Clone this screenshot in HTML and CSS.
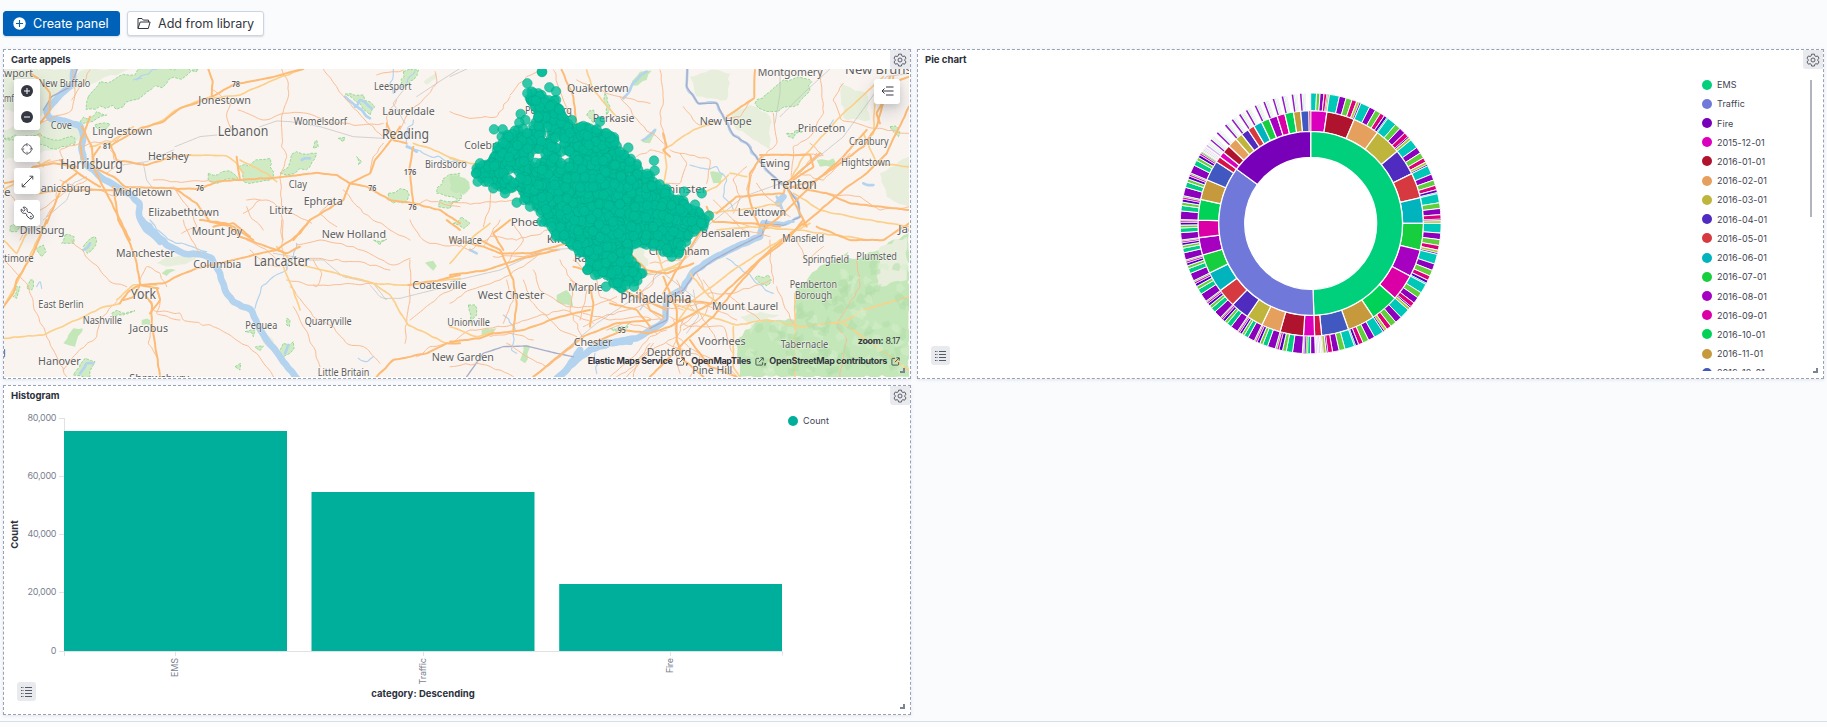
FILE: index.html
```html
<!DOCTYPE html>
<html lang="en">
<head>
<meta charset="utf-8">
<title>Dashboard</title>
<link rel="stylesheet" href="styles.css">
</head>
<body>
<svg class="defs" width="0" height="0">
  <symbol id="gear" viewBox="0 0 16 16"><path fill="none" stroke="currentColor" stroke-width="1.1" stroke-linejoin="round" d="M6.4 1.3h3.2l.5 2 1.2.7 2-.6 1.6 2.7-1.5 1.4v1.2l1.5 1.4-1.6 2.7-2-.6-1.2.7-.5 2H6.4l-.5-2-1.2-.7-2 .6-1.6-2.7 1.5-1.4V7.500L1.100 6.100l1.600-2.700 2 .6 1.200-.7z"/><circle cx="8" cy="8" r="2.300" fill="none" stroke="currentColor" stroke-width="1.100"/></symbol>
  <symbol id="list" viewBox="0 0 11 10"><path stroke="currentColor" stroke-width="1" d="M4 .5h7M4 3.500h7M4 6.500h7M4 9.500h7M0 .5h1M0 3.500h1M0 6.500h1M0 9.500h1M1.500 .5h1M1.500 3.500h1M1.500 6.500h1M1.500 9.500h1"/></symbol>
  <symbol id="popout" viewBox="0 0 10 10"><path fill="none" stroke="currentColor" stroke-width=".9" d="M4.500 1.500H2a1 1 0 0 0-1 1V8a1 1 0 0 0 1 1h5.500a1 1 0 0 0 1-1V5.800M6 .9h3.200V4M9 1.100 4.300 5.800"/></symbol>
</svg>

<div class="toolbar">
  <button class="btn btn-primary">
    <svg width="13" height="13" viewBox="0 0 13 13"><circle cx="6.500" cy="6.500" r="6.200" fill="#fff"/><path d="M6.500 3v7M3 6.500h7" stroke="#0061b8" stroke-width="1.100"/></svg>
    <span>Create panel</span>
  </button>
  <button class="btn btn-outline">
    <svg width="14" height="13" viewBox="0 0 14 13"><path d="M1 11.500V1.500h4l1.300 1.600h5.200v2M1 11.500 3.200 5h9.900l-1.800 6.500z" fill="none" stroke="#343741" stroke-width="1" stroke-linejoin="round"/></svg>
    <span>Add from library</span>
  </button>
</div>

<main class="grid">
  <section class="panel">
    <h2>Carte appels</h2>
    <div class="gear"><svg width="14" height="14"><use href="#gear"/></svg></div>
    <div class="map">
      <svg id="map" width="905" height="308" viewBox="12 207 2715 924"></svg>
      <div class="controls">
        <div class="ctl zoom">
          <svg width="12" height="12" viewBox="0 0 12 12"><circle cx="6" cy="6" r="6" fill="#343741"/><path d="M6 3v6M3 6h6" stroke="#fff"/></svg>
          <svg width="12" height="12" viewBox="0 0 12 12"><circle cx="6" cy="6" r="6" fill="#343741"/><path d="M3 6h6" stroke="#fff"/></svg>
        </div>
        <div class="ctl"><svg width="12" height="12" viewBox="0 0 13 13"><circle cx="6.500" cy="6.500" r="5" fill="none" stroke="#343741" stroke-width=".9" stroke-dasharray="5.850 2" stroke-dashoffset="-1"/><path d="M6.500 0v3.500M6.500 9.500v3.500M0 6.500h3.500M9.500 6.500H13" stroke="#343741" stroke-width=".9"/></svg></div>
        <div class="ctl"><svg width="13" height="13" viewBox="0 0 13 13"><path d="M1.500 11.500l10-10M8.500 1.200h3.300v3.300M1.200 8.500v3.300h3.300" fill="none" stroke="#343741" stroke-width=".9"/></svg></div>
        <div class="ctl"><svg width="14" height="14" viewBox="0 0 14 14"><path d="M1.300 3.100 3.600 5.200 5.200 3.700 3.100 1.300C5.600.5 7.800 2.600 7 5.200l1.500 1.300 1.600-.2 2.600 2.500a2.400 2.400 0 0 1-3.400 3.400L6.700 9.900l.1-1.400-1.600-1.300C2.800 8 .5 5.800 1.300 3.100z" fill="none" stroke="#343741" stroke-width=".95" stroke-linejoin="round"/><circle cx="10.900" cy="10.600" r=".8" fill="#343741"/></svg></div>
      </div>
      <div class="ctl layers"><svg width="13" height="10" viewBox="0 0 13 10"><path d="M5 1h7.500M1 5h11.500M5 9h7.500M3.500 2.500 1 5l2.500 2.500" fill="none" stroke="#343741"/></svg></div>
      <div class="mapzoom"><b>zoom:</b> 8.17</div>
      <div class="attrib"><span>Elastic Maps Service</span> <svg width="9" height="9"><use href="#popout"/></svg>, <span>OpenMapTiles</span> <svg width="9" height="9"><use href="#popout"/></svg>, <span>OpenStreetMap contributors</span> <svg width="9" height="9"><use href="#popout"/></svg></div>
    </div>
    <i class="resize"></i>
  </section>

  <section class="panel">
    <h2>Pie chart</h2>
    <div class="gear"><svg width="14" height="14"><use href="#gear"/></svg></div>
    <div class="pie">
      <svg id="pie" width="779" height="308" viewBox="918 69 779 308"></svg>
      <ul id="legend" class="legend"></ul>
      <i class="scroll"></i>
    </div>
    <div class="listbtn"><svg width="11" height="10"><use href="#list"/></svg></div>
    <i class="resize"></i>
  </section>

  <section class="panel">
    <h2>Histogram</h2>
    <div class="gear"><svg width="14" height="14"><use href="#gear"/></svg></div>
    <div class="hist">
      <svg width="779" height="308" viewBox="4 405 779 308">
        <g fill="#00ae9c"><path d="M64 431h223v220H64zM311.500 492h223v159h-223zM559.200 584H782v67H559.200z"/></g>
        <path d="M64.500 418v13M59 418.500h5.500M59 476.500h5M59 534.500h5M59 592.500h5M59 651.500h723.500v4M64.500 651v5M175.500 651v5M423.500 651v5M670.500 651v5" fill="none" stroke="#e0e2e6"/>
        <g class="axis" text-anchor="end">
          <text x="56.500" y="421" textLength="29">80,000</text><text x="56.500" y="479" textLength="29">60,000</text><text x="56.500" y="537" textLength="29">40,000</text><text x="56.500" y="595" textLength="29">20,000</text><text x="56.500" y="654">0</text>
          <text transform="translate(178 658) rotate(-90)" textLength="19">EMS</text><text transform="translate(426 658) rotate(-90)" textLength="26.500">Traffic</text><text transform="translate(673 658) rotate(-90)" textLength="15">Fire</text>
        </g>
        <g class="axis-title" text-anchor="middle">
          <text transform="translate(18 534.500) rotate(-90)" textLength="28.500">Count</text><text x="423" y="697" textLength="103.500">category: Descending</text>
        </g>
      </svg>
      <ul class="legend"><li><i class="teal"></i>Count</li></ul>
    </div>
    <div class="listbtn"><svg width="11" height="10"><use href="#list"/></svg></div>
    <i class="resize"></i>
  </section>
</main>
<footer></footer>
<script src="charts.js"></script>
</body>
</html>
```

FILE: styles.css
```css
* { box-sizing: border-box; }
body { margin: 0; height: 727px; background: #fafbfd; font-family: Inter, "Liberation Sans", sans-serif; color: #343741; overflow: hidden; display: flex; flex-direction: column; }
.defs { position: absolute; }
.toolbar { display: flex; gap: 7px; padding: 11px 3px 0; height: 49px; align-items: flex-start; flex: none; }
.btn { height: 25px; border-radius: 3px; border: 1px solid #ccd5e3; display: flex; align-items: center; font: 12.600px Inter, sans-serif; letter-spacing: -.03px; padding: 0 9px; background: #fff; color: #343741; box-shadow: 0 1px 2px rgba(0,0,0,.14); white-space: nowrap; }
.btn svg { flex: none; }
.btn-primary { background: #0061b8; border-color: #0061b8; color: #fff; width: 117px; gap: 7px; padding: 0 0 0 9px; }
.btn-outline { width: 137px; gap: 7px; padding-right: 0; }
.grid { display: grid; grid-template-columns: 908px 907px; grid-auto-rows: 330px; column-gap: 6px; row-gap: 6px; padding-left: 3px; flex: none; }
.panel { position: relative; background: #fff; border: 1px dashed #98a2b3; display: flex; flex-direction: column; box-shadow: 0 1px 3px rgba(100,115,150,.16); }
.panel h2 { margin: 0; height: 19px; padding-left: 7px; font-size: 9.600px; line-height: 19px; font-weight: 700; flex: none; color: #2c303a; }
.gear { position: absolute; top: 0; right: 0; width: 20px; height: 19px; background: #e9eaed; border-radius: 0 0 0 3px; display: flex; align-items: center; justify-content: center; color: #535966; }
.listbtn { position: absolute; left: 13px; bottom: 13px; width: 19px; height: 19px; border-radius: 3px; background: #e9eaed; display: flex; align-items: center; justify-content: center; color: #555a69; }
.resize { position: absolute; right: 5px; bottom: 5px; width: 5px; height: 5px; border-right: 2px solid #7c8494; border-bottom: 2px solid #7c8494; }
.map { position: relative; height: 308px; width: 905px; overflow: hidden; }
.map > svg { display: block; }
.controls { position: absolute; left: 10px; top: 10px; display: flex; flex-direction: column; gap: 6px; }
.ctl { width: 26px; height: 26px; background: #fff; border-radius: 3px; display: flex; align-items: center; justify-content: center; box-shadow: 0 8px 20px rgba(50,55,70,.2), 0 3px 6px rgba(50,55,70,.14); }
.zoom { height: 51px; flex-direction: column; gap: 14px; padding-bottom: 1px; }
.layers { position: absolute; right: 9px; top: 10px; height: 25px; padding-bottom: 1px; }
.mapzoom { position: absolute; right: 9px; bottom: 30px; font-size: 9px; letter-spacing: -.35px; line-height: 12px; white-space: nowrap; }
.attrib { position: absolute; right: 9px; bottom: 10px; font-size: 9px; letter-spacing: -.33px; line-height: 12px; font-weight: 700; white-space: nowrap; display: flex; align-items: center; }
.attrib span { margin-right: 4px; }
.attrib svg + span { margin-left: 3px; }
.pie, .hist { display: flex; position: relative; height: 308px; }
.pie > svg, .hist > svg { flex: none; }
.legend { margin: 0; list-style: none; padding: 6px 0 0 5px; height: 302px; overflow: hidden; flex: none; font-size: 9px; color: #404452; width: 105px; }
.legend li { display: flex; align-items: center; height: 19.220px; gap: 5px; white-space: nowrap; letter-spacing: .08px; }
.legend li i { width: 10px; height: 10px; border-radius: 5px; background: var(--c); flex: none; }
.legend .teal { background: #00ae9c; }
.scroll { margin: 11px 0 0 8px; width: 2px; height: 137px; background: #b2b5bd; }
.axis { font: 9px Inter, sans-serif; fill: #7a8190; }
.axis-title { font: 700 9.500px Inter, sans-serif; fill: #2c303a; }
footer { margin-top: 6px; flex: 1; border-top: 1px solid #d8dde5; background: #fdfdfe; }
.m { stroke: #fdbb75; stroke-width: 6; }
.y { stroke: #fcd08a; stroke-width: 5; }
.t { stroke: #fabd92; stroke-width: 3; }
.r { stroke: #bdbbbb; stroke-width: 2; }
.w { stroke: #b3d3ee; stroke-width: 20; }
.w2 { stroke: #b3d3ee; stroke-width: 8; }
.w3 { stroke: #b3d3ee; stroke-width: 3.500; }
.b { stroke: #a9adc8; stroke-width: 4; }
.g { fill: #d0ebc4; stroke: #8ad28c; stroke-width: 2.500; stroke-dasharray: 8 4; }
.l { fill: #e7efdc; stroke: none; }
.d { fill: #c4e7b9; stroke: none; }
.town { font-family: "Noto Sans", sans-serif; fill: #5e5e5e; stroke: #fff; stroke-width: 3; stroke-opacity: .7; paint-order: stroke; }
.calls { fill: #00bd98; fill-opacity: .8; stroke: #00a584; stroke-width: 2; stroke-opacity: .65; }
```

FILE: charts.js
```js
const NS = 'http://www.w3.org/2000/svg';
function add(parent, tag, attrs, text) {
  const e = document.createElementNS(NS, tag);
  for (const k in attrs) e.setAttribute(k, attrs[k]);
  if (text) e.textContent = text;
  parent.appendChild(e);
  return e;
}
let seed = 7;
function rnd() { seed = (seed * 16807) % 2147483647; return seed / 2147483647; }

/* ---------- map ---------- */
const map = document.getElementById('map');
add(map, 'rect', { x: 0, y: 200, width: 2740, height: 940, fill: '#f9f4f0' });
const tiles = { A: [0, 0], B: [0, 660], C: [1350, 120], D: [1350, 660] };
const shapes = `
A l 10,207 210,207 230,240 120,350 10,330
A l 10,390 120,360 230,370 240,420 120,460 10,480
A g 265,290 300,245 385,225 430,205 595,207 500,250 440,275 370,320 258,328
A g 240,365 290,335 320,345 250,370
A l 210,270 300,240 390,207 270,207 210,230
A g 10,415 120,400 160,420 225,415 225,435 150,445 20,420
A g 285,375 330,372 320,385 290,385
A g 625,520 665,515 700,520 715,540 640,550
A g 715,500 810,475 810,500 820,535 730,545
A g 840,520 870,485 890,455 950,460 930,500 860,525
A g 945,425 940,445 955,440 950,420
A g 1015,415 1035,412 1030,425
A g 1035,282 1090,285 1125,320 1110,345 1080,310
A g 1210,215 1255,210 1240,240 1205,260
A g 1070,470 1085,485 1075,495
A g 1165,580 1220,570 1220,605 1180,610
A g 1340,530 1380,520 1385,595 1310,580
A g 1320,600 1380,600 1350,625 1315,620
A l 1270,245 1310,220 1310,235 1280,255
B g 105,80 130,75 138,95 125,110
B g 195,45 222,50 222,70 185,70
B g 250,80 285,50 290,60 262,100
B g 30,20 60,20 50,35 30,35
B g 90,180 100,180 95,210 80,205
B g 45,200 60,200 50,235 40,230
B l 470,130 505,110 590,110 570,125 500,140
B d 485,160 515,147 527,150 500,168
B g 335,280 405,272 370,285 340,290
B d 190,370 220,325 248,325 225,380
B g 230,450 255,415 285,425 270,470 220,465
B g 1120,60 1160,58 1140,75
B d 1275,128 1300,122 1310,138 1300,152
B g 860,295 870,300 868,320 860,315
B g 835,400 850,370 880,365 870,400 850,420
B g 735,335 765,330 760,350
B g 765,382 790,378 780,392
B g 705,440 722,430 720,450
B l 780,335 810,350 825,390 790,370
B d 425,300 450,300 450,315 425,315
C l 780,90 840,100 830,180 740,170 720,110
C l 1170,130 1250,160 1260,240 1180,235
C l 1290,400 1377,350 1377,500 1310,470
C l 840,220 900,195 960,230 960,330 900,290 860,270
C g 915,190 1000,120 1045,110 1085,125 1080,150 1030,200 965,215
C d 1100,360 1150,355 1155,380 1110,380
C g 1010,280 1060,275 1030,295
C g 465,160 480,200 470,225
C g 410,225 430,210 430,250
C d 570,300 620,265 600,310
C d 780,395 820,400 815,430 790,430
C g 1320,260 1345,265 1345,290
C d 530,150 570,95 605,92 590,120
C g 10,550 35,530 60,550 40,565
C d 0,405 45,415 60,445 40,465 0,450
D d 885,330 940,295 1035,300 1035,215 1100,150 1150,120 1230,115 1377,40 1377,470 870,470 860,370
D d 320,225 350,210 365,230 370,260 320,245
D g 55,255 75,255 80,285 60,310
D g 480,325 535,310 520,330
D g 915,175 955,165 960,190 930,190
D d 220,375 240,380 225,430 210,420
D l 550,90 575,80 595,135 570,145
D l 870,290 930,275 990,285 900,310
D l 1290,80 1370,50 1370,180 1280,200
D d 95,330 140,325 125,342 95,345
D d 1180,105 1195,95 1190,110
A w 222,207 220,250 185,280 158,310 140,335 150,355 200,365 240,378
A w 240,378 250,410 245,450 255,490 300,530 350,560 395,585 418,610 418,650 440,690 480,725
A b 232,207 212,260 155,290 130,330
A w3 410,240 430,225 470,208
A w3 425,235 400,240
A w2 1035,290 1070,320 1110,355
A w2 1065,320 1080,300 1115,325
A w3 1180,207 1170,250 1180,280 1220,250 1245,215
A w2 905,480 930,475
A w3 1240,360 1220,400 1225,440 1270,460 1380,490
A w2 1220,440 1250,455
B w 425,0 455,30 500,75 550,100 610,105 635,115 660,160 675,210 700,245 755,272 775,320 800,360 840,410 895,480
B w3 450,0 480,35 520,65 620,95
B w2 250,90 270,70
B w3 110,200 120,185 125,205
B w3 765,265 785,200 820,170 860,150 880,110 890,70
B w2 240,460 260,430 280,430
B w2 855,400 865,375
B w3 1075,415 1100,425 1120,410
C w2 520,175 560,120 590,95
C w2 580,300 615,270
C w2 712,87 710,140 745,190 800,190 825,240 850,285 890,310 925,360 960,400 1010,440 1045,490 1050,530 1000,555 945,550
C b 712,87 710,140 745,190 800,190 825,240 850,285 890,310 925,360 960,400 1010,440 1045,490 1050,530 1000,555 945,550
C w3 720,375 760,385 800,380 830,420 820,470 850,510
C w2 980,470 1000,520
C w 985,490 1000,470
C w2 1240,430 1270,435
C w3 1130,270 1150,240
D w2 1030,5 1000,10 950,5
D w 940,10 930,50 860,80 790,115 730,155 700,205 650,235 645,300 620,320 560,355 480,370 420,390 370,430 320,475
D w 390,390 350,450 320,480
D w 430,375 500,365 540,365
D b 950,0 935,45 865,80 790,120 735,160 700,210 655,230 650,300 600,325
D b 50,470 100,400 160,380 230,378 320,400 370,410
D w3 830,115 880,155 920,190 970,220
D w3 160,285 195,325 185,390 200,400
D w2 60,90 80,100
D w3 435,400 440,460
D w3 570,270 590,230
A t 60,720 110,640 190,580 260,540
A t 215,207 225,280 215,330 120,370
A t 970,207 1010,260 1050,310 1095,360 1150,410
A t 845,207 865,250 865,290 845,350 845,440 860,470 840,530 845,600 850,720
A t 640,270 690,310 680,350 700,400
A t 715,330 790,360 850,340 920,340 1000,370 1080,375 1150,370
A t 1305,215 1310,250 1260,310 1225,340 1200,390
A t 1190,300 1160,350 1160,400
A t 1130,225 1180,215 1210,210
A t 520,560 570,630 590,680 545,700
A t 270,210 250,250 215,300
A t 460,540 530,545 640,545
A t 740,600 800,600 850,625 935,670
A t 1030,570 1090,640 1170,690 1230,720
A t 1000,600 960,640 1010,680
A t 730,640 760,620 780,600
A t 180,540 230,560 300,570 350,590
A t 140,650 170,600 170,570
A t 10,560 60,620 120,680
A t 130,490 190,480 180,450 240,430
A t 330,450 350,490 320,520
A t 250,440 270,430 350,420 380,390
A t 1150,430 1120,470 1110,520
A t 1240,620 1280,600 1380,620
A r 525,440 600,410 650,405
A r 365,495 440,485 520,450
A r 780,380 830,363 870,365 960,380 1060,410 1150,415
A r 430,490 440,540 470,580
A r 1250,290 1310,250 1380,205
A r 130,660 200,600 220,550 260,530
A r 1210,270 1180,310 1215,370
B t 10,120 80,190 110,280 160,390 200,470
B t 215,60 280,130 330,185 380,200
B t 440,230 460,270 540,280 550,300 640,320 690,345 770,400 820,470
B t 350,245 300,300 290,350 230,400 190,450
B t 470,210 480,250 470,280 540,300
B t 455,310 445,370 470,410
B t 420,180 440,140 480,160 500,200
B t 550,0 575,60 600,100
B t 740,60 800,90 830,120
B t 840,140 790,130 750,90
B t 845,0 845,80 860,150
B t 860,180 910,190 950,200 965,160 940,120
B t 870,200 910,250 940,290 1000,320 1040,370 1090,380 1140,430
B t 880,260 910,320 940,380 960,440
B t 1230,120 1230,230 1220,310 1215,370
B t 890,75 960,60 1060,80 1180,135 1230,115
B t 930,115 1080,125 1170,150
B t 940,195 1130,190
B t 1250,410 1290,380 1380,360
B t 1230,0 1260,50 1290,70 1380,80
B t 740,-40 760,0 790,30
B t 1380,200 1330,220 1230,300
B r 930,120 970,120 1030,170 1120,190 1155,235 1200,235 1340,200
B r 820,100 880,110 930,120
B r 1110,195 1140,230 1160,238
C t 0,215 60,235 140,230 180,170
C t 180,165 230,110 270,90
C t 380,120 470,160 600,190
C t 630,90 640,180 630,220 645,320
C t 310,90 340,180 370,240
C t 660,330 780,360 770,430
C t 510,170 570,250 640,310
C t 640,340 600,330 560,350
C t 690,340 710,370 690,430 640,430
C t 905,180 870,230 830,235
C t 0,490 90,490 200,480
C t 125,440 120,500 100,560
C t 970,220 980,310 920,370 890,450
C t 1110,90 1120,220 1080,290 1030,320 1025,420
C t 1180,130 1150,180 1175,240 1250,260 1377,280
C t 1100,340 1050,400 1120,420 1200,340
C t 890,380 850,420 870,470 850,520
C t 790,480 850,540 900,560
C t 1120,460 1230,470 1290,510 1377,500
C t 700,200 740,250 760,260
C t 1020,530 950,470 920,430
C t 1080,310 1120,345 1040,345
D t 0,60 60,90 120,50 150,0
D t 0,250 60,210 150,180 220,140 280,90
D t 190,10 220,60 170,130
D t 0,370 60,330 160,320 260,290 340,270 430,310
D t 130,110 220,110 330,90
D t 170,180 190,240 160,310
D t 220,180 240,240 330,330 380,350
D t 250,150 270,210 350,260 420,260 500,230
D t 100,80 120,50 200,60 300,30
D t 330,120 370,190 360,270 400,360
D t 370,120 440,180 450,230 500,250
D t 400,320 460,290 530,270 600,250 700,270
D t 400,280 480,300 560,290 640,300
D t 560,190 570,250 610,280 640,300
D t 620,160 600,200 570,220
D t 680,180 700,240 740,280 690,320
D t 650,330 600,350 560,400 480,470
D t 660,290 720,320 820,320 850,400
D t 670,300 680,350 730,390 800,420 860,470
D t 680,260 760,250 860,300
D t 700,300 670,380 690,460
D t 700,330 760,290 790,230 760,180
D t 610,370 560,430 550,470
D t 650,370 750,410 720,470
D t 740,160 770,220 850,220 960,180
D t 830,220 880,260 930,300
D t 960,60 960,120 970,190
D t 980,200 1000,250 1030,310
D t 1040,60 1070,120 1120,80
D t 1220,120 1230,200 1160,310
D t 850,0 880,30 960,50
D t 600,130 700,120 740,90
D t 120,350 180,340 250,360
D t 170,370 250,420 290,440 370,380
D t 0,440 80,430 150,450 190,470
D t 470,330 520,310 580,320 620,340
D t 390,300 410,210 360,180
D t 730,240 760,300 810,370
D t 1160,310 1190,360 1170,470
D t 530,470 600,390 680,350
D t 500,470 550,440 600,370
C r 0,110 50,87
C r 1377,100 1310,110 1180,290 1020,420 880,470 770,560
C r 990,87 990,160 975,250
D r 0,185 150,150 280,90 370,85
D r 770,20 700,120 620,170 560,230 440,310 250,470
D r 490,210 540,170 640,160 730,230
D r 730,210 745,290 710,340
C r 1140,87 1060,160 990,230
A y 430,385 490,360 520,335 600,300 720,285 820,240 910,207
A y 10,570 60,540 110,500 150,480
A y 120,400 100,470 130,500
A y 570,465 680,468 710,490 730,520
A y 1240,430 1290,445 1380,485
A y 270,440 335,425 400,380
A y 720,480 760,500 800,520 830,545
B y 10,355 130,345 230,300 300,265 360,250
B y 350,240 400,195 470,195
B y 830,80 880,130 990,155 1120,190 1225,195
B y 850,140 880,210 900,270
B y 1120,190 1170,225 1225,315 1340,370
B y 10,60 50,100 80,40
B y 1225,195 1300,185 1380,175
B y 140,0 60,170 10,260
C y 410,90 430,150 500,230
C y 1275,170 1270,280 1250,300
C y 640,330 730,270 800,245
C y 645,330 650,380 640,430
C y 1300,110 1180,220 1060,350 1010,440
C y 835,405 800,440 760,460
C y 890,410 840,400
C y 1030,460 1110,510 1200,530 1377,560
C y 0,355 60,370 110,370
C y 1240,280 1280,370 1377,380
C y 770,520 870,510 990,490
D y 0,320 80,350 130,335
D y 560,170 640,150 690,130
D y 680,310 720,250 850,150 990,60 1080,10
D y 670,250 750,280 860,315 950,300 1060,320 1180,305 1240,270 1377,230
D y 1035,220 1035,470
D y 1180,310 1377,450
D y 720,160 760,210 800,250
D y 850,320 850,440 870,470
D y 600,40 640,150 700,140
D y 0,130 70,50 120,10
D y 800,30 900,20 1040,30 1260,60
A m 625,207 638,245 635,290
A m 910,207 800,235 700,255 635,290 600,305 540,325 490,365 420,385 360,420 330,440
A m 300,440 280,470 280,500 340,530 375,560 500,565 600,567 650,545 720,540 840,532 950,518 1010,525 1050,550 1100,560 1170,600 1240,610 1320,630 1380,670
A m 1050,550 1110,520 1125,480 1150,450 1180,410 1200,380
A m 1050,550 1030,600 930,660 880,720
A m 1240,440 1228,510 1240,610
A m 120,370 150,330 150,280 120,240 90,220
A m 245,380 275,440 280,500 320,580 350,640 390,720
A m 10,550 60,540 100,500 160,490 230,500
A m 180,480 250,530 300,560
A m 270,350 240,430 250,500
A m 330,430 350,480 440,495 520,470 570,465
A m 230,520 190,550 140,670
A m 710,470 720,540
A m 530,570 590,610 630,665 700,680 760,720
A m 1160,370 1180,420 1220,430
A m 110,580 190,570 300,570 380,570
B m 355,0 390,70 410,130 422,195 475,205
B m 340,-100 355,0
B m 360,250 385,215 420,195 490,190 540,165 590,145 680,125 760,105 830,90 900,40 930,0
B m 420,195 400,230 370,240
B m 435,225 455,250 455,310 465,370 480,470
B m 470,205 480,240 450,280
B m 600,0 680,10 720,50 800,80 860,100 900,80
B m 640,20 700,10 750,50
B m 10,260 40,220 50,180 100,100 140,0
B m 1225,195 1320,180 1380,165
B m 1130,470 1180,420 1280,400 1340,370 1380,370
B m 1340,0 1380,30
C m 335,90 370,170 380,250
C m 915,90 912,175 830,230
C m 800,520 860,470 1000,460 1010,430 1110,340
C m 1250,270 1180,350 1090,430 1000,520 940,570
C m 1377,200 1310,340 1250,400 1180,450 1060,555
C m 1320,110 1280,260 1240,320 1100,420 1030,440
C m 935,350 900,400 895,460 910,520 930,560
C m 930,345 1080,345 1090,380 1030,420
C m 1020,440 1130,460 1200,490 1377,510
C m 640,280 650,320 640,330 660,350
C m 1010,440 1040,500 1070,560
C m 770,500 790,545 900,550 990,560
C m 1330,110 1320,160 1350,120 1377,110
C m 1310,160 1280,220 1290,250
D m 0,55 100,80 150,100 240,100 350,70
D m 0,165 110,150 200,120 320,90
D m 90,60 150,90 190,180 200,250 190,330
D m 0,365 90,355 130,340 220,330 330,290 420,270
D m 180,0 130,40 160,90
D m 1060,0 1020,50 930,120 860,200 790,290 720,350 600,470
D m 1377,10 1300,60 1200,60 1100,20
D m 640,170 680,270 680,360 700,420 760,470
D m 430,370 520,330 600,340 660,320 800,240 960,90 1060,10
D m 640,240 700,240 780,250
D m 420,200 430,250 420,320
D m 570,210 600,270 640,290
D m 250,470 300,430 400,350 500,310 600,300
D m 760,20 680,150 640,220
D m 540,100 590,150 650,160 730,130
D m 720,360 780,440 860,470
D m 480,250 560,270 600,320
D m 370,140 470,170 540,220 650,270`;

function smooth(pts) {
  let d = 'M' + pts[0];
  for (let i = 0; i < pts.length - 1; i++) {
    const a = pts[i - 1] || pts[i], b = pts[i], c = pts[i + 1], e = pts[i + 2] || c;
    d += `C${b[0] + (c[0] - a[0]) / 7},${b[1] + (c[1] - a[1]) / 7} ${c[0] - (e[0] - b[0]) / 7},${c[1] - (e[1] - b[1]) / 7} ${c[0]},${c[1]}`;
  }
  return d;
}
/* subdivide with small offsets so coastlines, woods and lanes look natural */
function rough(pts, amp, closed) {
  const out = [];
  const n = closed ? pts.length : pts.length - 1;
  for (let i = 0; i < n; i++) {
    const a = pts[i], b = pts[(i + 1) % pts.length];
    const len = Math.hypot(b[0] - a[0], b[1] - a[1]);
    const k = Math.max(1, Math.round(len / 16));
    for (let j = 0; j < k; j++) {
      const t = j / k, s = j ? amp : 0;
      out.push([a[0] + (b[0] - a[0]) * t + (rnd() - .5) * s, a[1] + (b[1] - a[1]) * t + (rnd() - .5) * s]);
    }
  }
  if (!closed) out.push(pts[pts.length - 1]);
  return out;
}
shapes.trim().split('\n').forEach(line => {
  const [tile, cls, ...raw] = line.split(' ');
  let pts = raw.map(p => p.split(',').map(Number)).map(p => [p[0] + tiles[tile][0], p[1] + tiles[tile][1]]);
  if ('gld'.includes(cls)) {
    pts = rough(pts, cls === 'g' ? 16 : 10, true);
    add(map, 'path', { class: cls, d: 'M' + pts.join('L') + 'Z' });
  } else {
    const amp = { t: 6, w3: 10, w2: 7, m: 2, y: 3, w: 4 }[cls] || 0;
    pts = rough(pts, amp, false);
    add(map, 'path', { class: cls, d: smooth(pts), fill: 'none', 'stroke-linecap': 'round', 'stroke-linejoin': 'round' });
  }
});

/* pinelands texture */
for (let i = 0; i < 170; i++) {
  const x = 2250 + rnd() * 470, y = 790 + rnd() * 335;
  if (x < 2390 && y < 970) continue;
  if (y < 900 && x < 2440 + (900 - y)) continue;
  const q = [];
  for (let a = 0; a < 7; a++) { const r = 4 + rnd() * 18; q.push([x + r * Math.cos(a * .9), y + r * Math.sin(a * .9)]); }
  add(map, 'path', { d: 'M' + q.join('L') + 'Z', fill: rnd() > .5 ? '#b2dda9' : '#d5eecb', 'fill-opacity': .55 });
}

/* tile, size, start x, end x, baseline, name; a missing bound leaves the natural width */
const towns = `
A 35 12 99 232 wport|A 31 115 271 260 New Buffalo|A 34 12 42 305 mf|A 31 152 216 388 Cove|A 35 277 457 404 Linglestown
A 41 653 805 407 Lebanon|A 35 595 753 312 Jonestown|A 31 881 1041 375 Womelsdorf|A 31 1122 1235 269 Leesport|A 35 1147 1304 345 Laureldale
A 41 1146 1287 417 Reading|A 31 1275 1400 503 Birdsboro|A 35 444 567 479 Hershey|A 41 181 368 506 Harrisburg|A 35 102 272 575 hanicsburg
A 35 338 516 587 Middletown|A 35 445 657 647 Elizabethtown|A 35 575 727 705 Mount Joy|A 35 59 194 702 Dillsburg|A 31 866 921 564 Clay
A 35 911 1028 614 Ephrata|A 35 808 878 643 Lititz|A 35 965 1158 714 New Holland|A 35 - 32 588 e
A 27 695 720 262 78|A 27 309 333 446 81|A 27 587 612 573 76|A 27 1211 1249 524 176|A 27 1105 1129 573 76|A 27 1225 1250 629 76
B 35 348 524 110 Manchester|B 31 12 101 126 timore|B 35 580 724 145 Columbia|B 41 761 929 138 Lancaster|B 41 392 468 236 York
B 31 115 251 264 East Berlin|B 31 248 366 313 Nashville|B 35 388 504 336 Jacobus|B 31 736 832 328 Pequea|B 31 914 1055 316 Quarryville
B 35 1237 1400 208 Coatesville|B 35 114 242 435 Hanover|B 35 388 567 485 Shrewsbury|B 31 953 1108 467 Little Britain
B 35 1295 1482 424 New Garden|B 31 1346 1446 72 Wallace|B 31 1342 1470 318 Unionville|B 35 - 18 405 g
C 35 351 536 156 Quakertown|C 35 428 553 246 Perkasie|C 31 225 366 222 Pennsburg|C 31 43 - 328 Colebrookdale|C 35 749 905 256 New Hope
C 35 923 1118 109 Montgomery|C 39 1185 - 102 New Brunswick|C 35 1043 1186 275 Princeton|C 31 1197 1316 316 Cranbury|C 31 1174 1321 377 Hightstown
C 35 930 1020 381 Ewing|C 41 963 1100 448 Trenton|C 35 863 1008 527 Levittown|C 35 - 770 458 Warminster|C 35 182 - 557 Phoenixville
D 35 753 900 50 Bensalem|D 31 997 1122 67 Mansfield|D 31 1058 1197 128 Springfield|D 31 1219 1341 119 Plumsted|D 35 1345 - 38 Jackson
D 35 596 778 106 Cheltenham|D 35 290 - 68 King of Prussia|D 35 372 - 126 Radnor|D 35 355 458 214 Marple|D 35 83 283 236 West Chester
D 41 511 724 248 Philadelphia|D 31 1019 1161 203 Pemberton|D 31 1035 1146 237 Borough|D 35 786 985 269 Mount Laurel|D 35 371 487 377 Chester
D 35 590 724 407 Deptford|D 35 745 887 376 Voorhees|D 31 992 1135 383 Tabernacle|D 35 727 847 461 Pine Hill|D 27 503 527 340 95`;
towns.trim().split(/[|\n]/).forEach(t => {
  const [tile, size, x0, x1, y, ...name] = t.split(' ');
  const [ox, oy] = tiles[tile];
  const at = { class: 'town', 'font-size': size, y: +y + oy };
  if (x0 === '-') { at.x = +x1 + ox; at['text-anchor'] = 'end'; }
  else {
    at.x = +x0 + ox;
    if (x1 !== '-') { at.textLength = x1 - x0; at.lengthAdjust = 'spacingAndGlyphs'; }
  }
  if (size === '27') at['font-weight'] = 600;
  add(map, 'text', at, name.join(' '));
});

/* emergency calls */
const area = [[245,155],[265,160],[318,180],[325,205],[365,240],[355,265],[400,258],[440,268],[492,292],[500,318],[560,372],[600,408],[650,447],[700,483],[745,516],[765,540],[760,560],[715,585],[708,605],[685,642],[665,650],[640,635],[610,618],[560,610],[535,630],[545,665],[577,700],[562,722],[515,745],[490,730],[470,705],[435,705],[412,690],[420,655],[388,637],[345,598],[318,590],[305,560],[275,545],[260,500],[222,480],[210,440],[165,448],[105,425],[78,400],[80,385],[130,358],[143,320],[155,290],[195,272],[250,258],[265,230],[240,175]];
function inside(x, y) {
  let r = false;
  for (let i = 0, j = area.length - 1; i < area.length; j = i++) {
    const [a, b] = area[i], [c, d] = area[j];
    if ((b > y) !== (d > y) && x < (c - a) * (y - b) / (d - b) + a) r = !r;
  }
  return r;
}
const gaps = [[290,285],[322,308],[262,350],[193,408],[205,462],[237,262],[345,350]];
const dots = [];
for (let y = 150; y < 750; y += 12) for (let x = 70; x < 775; x += 12) {
  const px = x + (rnd() - .5) * 12, py = y + (rnd() - .5) * 12;
  if (inside(px, py) && !gaps.some(g => Math.hypot(g[0] - px, g[1] - py) < 15.5)) dots.push([px, py]);
}
area.forEach(p => dots.push(p));
dots.sort(() => rnd() - .5);
dots.push([276,95],[276,96],[232,130],[298,142],[318,154],[212,222],[226,240],[208,248],[232,160],[132,268],[158,268],[535,323],[612,362],[614,392],[755,460],[777,527],[703,455],[735,494],[83,425],[200,488],[240,500],[468,740],[552,740],[450,245],[90,370],[470,280],[165,460],[130,445]);
const calls = add(map, 'g', { class: 'calls', transform: 'translate(1350 120)' });
dots.forEach(p => add(calls, 'circle', { cx: p[0].toFixed(1), cy: p[1].toFixed(1), r: 14.5 }));

/* ---------- sunburst ---------- */
const pie = document.getElementById('pie');
const CX = 1310.7, CY = 223.4;
function arc(r0, r1, a0, a1, fill, sw, op) {
  const P = (r, a) => { const t = a * Math.PI / 180; return (CX + r * Math.sin(t)).toFixed(2) + ' ' + (CY - r * Math.cos(t)).toFixed(2); };
  const big = a1 - a0 > 180 ? 1 : 0;
  add(pie, 'path', { d: `M${P(r0, a0)}L${P(r1, a0)}A${r1} ${r1} 0 ${big} 1 ${P(r1, a1)}L${P(r0, a1)}A${r0} ${r0} 0 ${big} 0 ${P(r0, a0)}Z`, fill, stroke: '#fff', 'stroke-width': sw, 'fill-opacity': op || 1 });
}
const months = ['#da00bd','#b0132e','#e6a05e','#bfb53c','#4f2bc0','#d63a40','#00b3bd','#17cf3e','#a600c0','#db00a5','#00d157','#c6993c','#4058c0','#d41449'];
const rings = [
  { c: '#00cf7c', b: [0, 8.3, 22.7, 36.3, 50.2, 63.8, 76.8, 90, 103.8, 117.9, 131.6, 146.3, 160.4, 174.4, 178],
    s: [['#00c8b9', .31], ['#8c00bd', .21], ['#5fcf3c', .19], ['#db007b', .15], ['#abc93b', .09], ['#5c00bd', .05]] },
  { c: '#7079d9', b: [178, 183.7, 195.8, 205.7, 214.2, 223.8, 233.4, 243.9, 253.7, 262.7, 271.7, 282.3, 292.8, 303.2, 306.2],
    s: [['#8c00bd', .36], ['#00cc86', .23], ['#68cf3c', .14], ['#5200bd', .13], ['#de00bd', .08], ['#4bcf3c', .06]] },
  { c: '#7800b8', b: [306.2, 309.2, 313.4, 318.4, 322.2, 326.2, 329.7, 334.1, 338.3, 342.6, 346.7, 351.2, 354.9, 359.1, 360], s: null }
];
rings.forEach((g, gi) => {
  for (let i = 0; i < 14; i++) {
    const a = g.b[i], b = g.b[i + 1], w = b - a;
    arc(92, 112.7, a, b, months[i], i === 13 && gi === 2 ? .8 : 1.2);
    if (i === 13) {
      if (gi < 2) for (let k = 0; k < 5; k++) arc(113, 130, a + w * k / 5, a + w * k / 5 + .25, ['#de00bd', '#68cf3c', '#8c00bd', '#00cc86', '#de00bd'][k], 0, .3);
      continue;
    }
    if (g.s) {
      let s = g.s;
      if (gi === 0 && i % 3 === 0) s = [s[0], s[2], s[1], s[3], s[5], s[4]];
      if (gi === 0 && i % 3 === 2) s = [s[0], s[1], s[2], s[3], ['#5c00bd', .1], ['#00cf90', .04]];
      let p = a;
      s.forEach(([c, f]) => { arc(112.8, 130.4, p, p + w * f, c, w * f < 1 ? .55 : .95); p += w * f; });
    } else {
      const q = a + .35;
      arc(113, 130, q, q + .7, '#8c00bd', 0, i ? .9 : .3);
      arc(113, 130, q + 1.2, q + 1.4, '#00cc86', 0, .4);
      arc(113, 130, q + 1.8, q + 1.95, '#68cf3c', 0, .4);
      arc(113, 130, q + 2.3, q + 2.4, '#de00bd', 0, .3);
    }
  }
  arc(66, 91.9, g.b[0], g.b[14], g.c, 1.2);
});

const names = ['EMS', 'Traffic', 'Fire', '2015-12-01', '2016-01-01', '2016-02-01', '2016-03-01', '2016-04-01', '2016-05-01', '2016-06-01', '2016-07-01', '2016-08-01', '2016-09-01', '2016-10-01', '2016-11-01', '2016-12-01'];
const colors = rings.map(r => r.c).concat(months);
document.getElementById('legend').innerHTML = names.map((n, i) => `<li><i style="--c:${colors[i]}"></i>${n}</li>`).join('');
```
